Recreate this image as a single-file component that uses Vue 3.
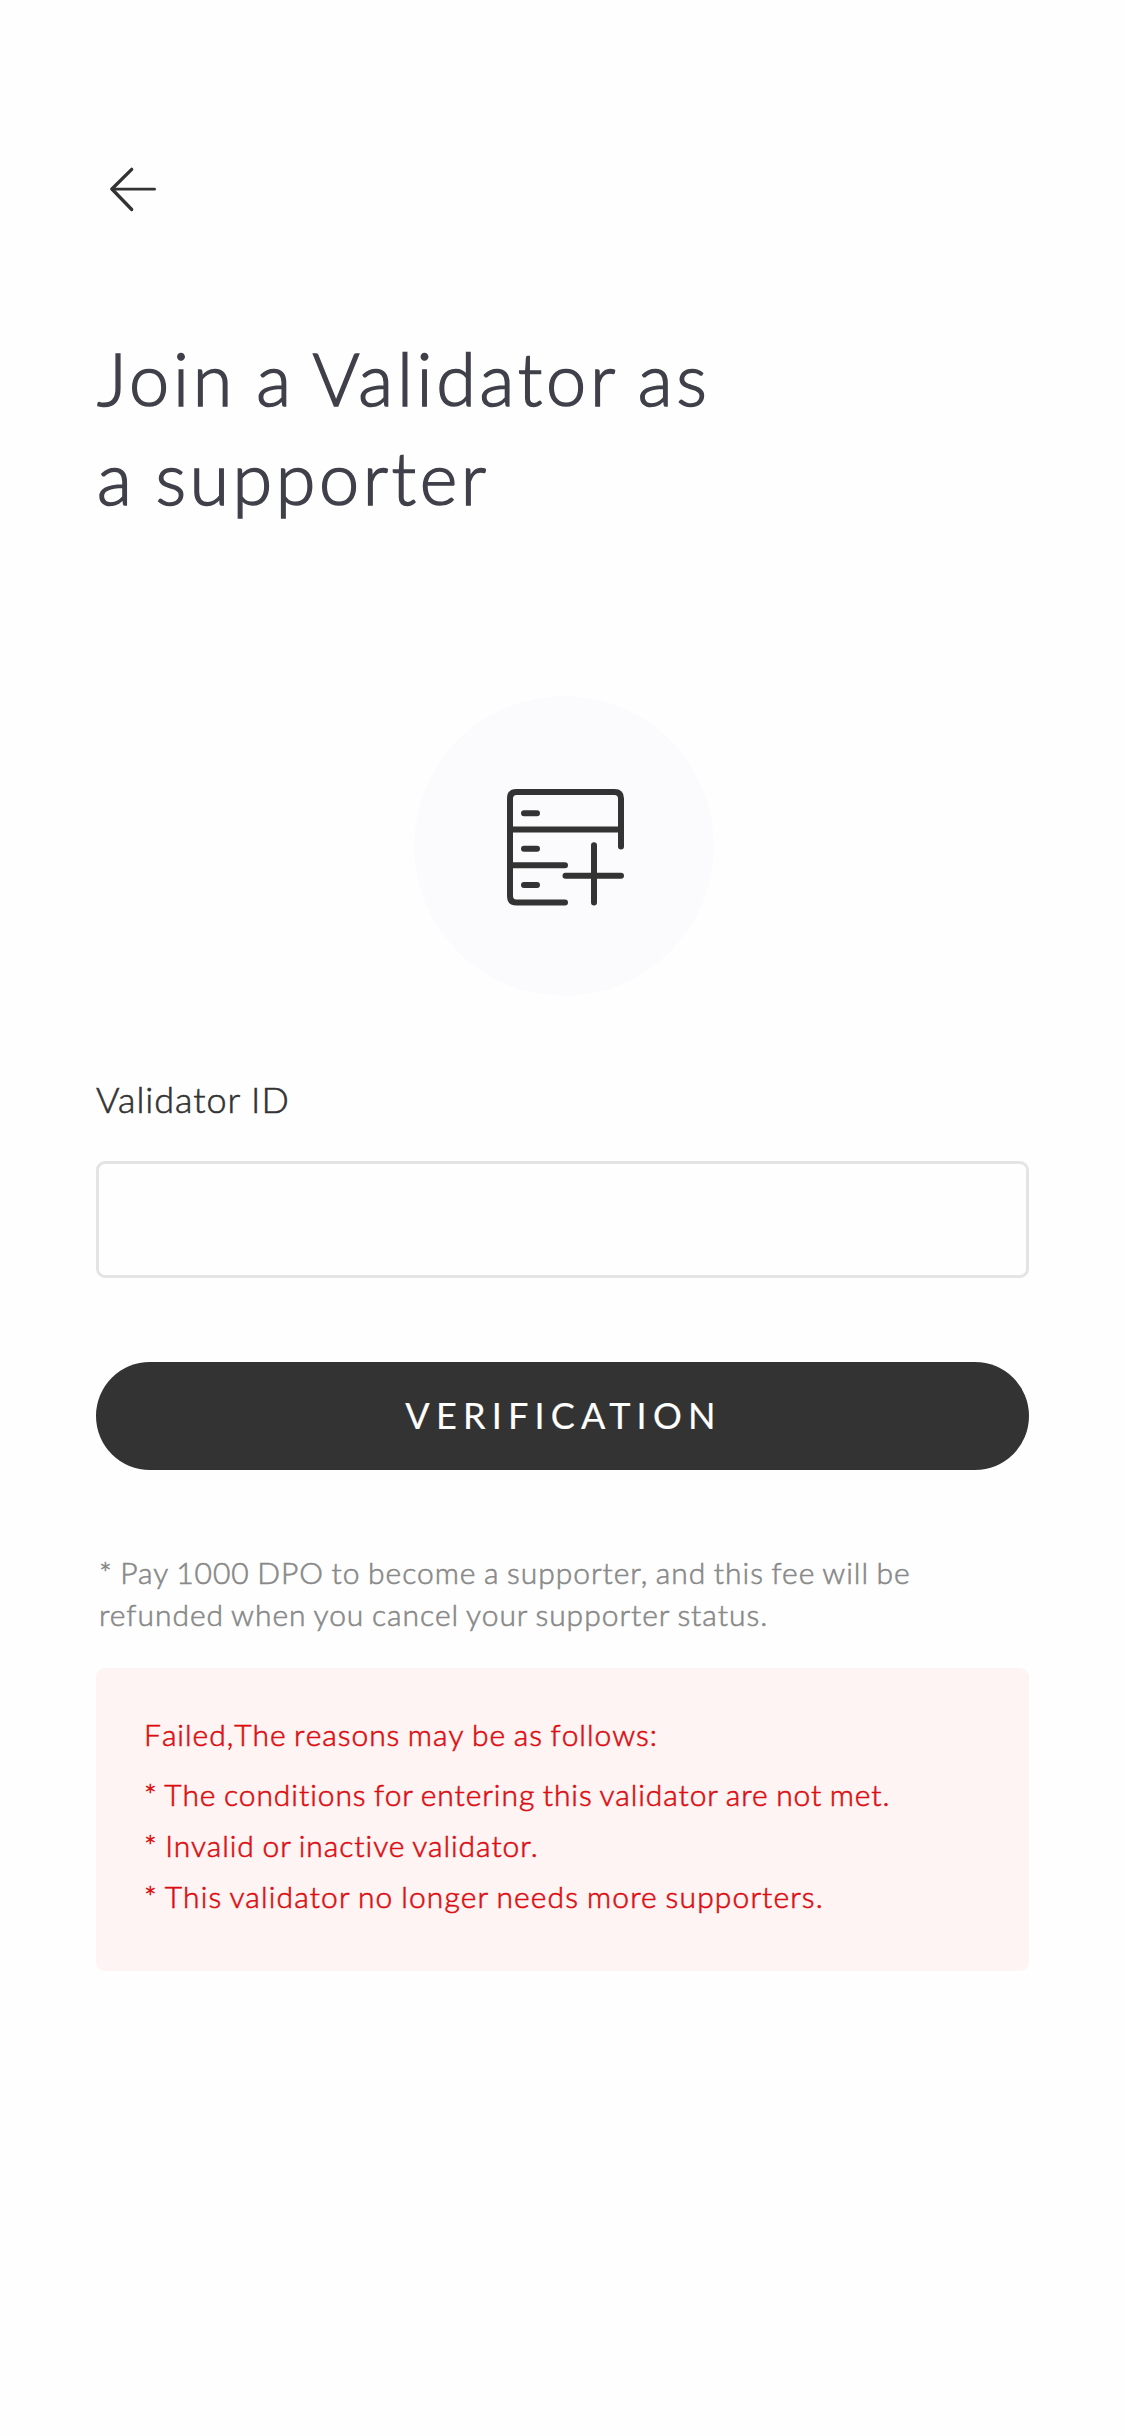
<script setup>
import { ref } from 'vue'

const validatorId = ref('')
const reasons = [
  { text: '* The conditions for entering this validator are not met.', cls: 'conditions' },
  { text: '* Invalid or inactive validator.', cls: 'invalid' },
  { text: '* This validator no longer needs more supporters.', cls: 'full' },
]
</script>

<template>
  <main class="page">
    <button class="back" aria-label="Back">
      <svg width="48" height="48" viewBox="0 0 48 48" fill="none" stroke="#333" stroke-linecap="round" stroke-linejoin="round">
        <path d="M22.7 4.3 2.9 24l19.8 20.5" stroke-width="3.3" />
        <path d="M3 24.2h42.5" stroke-width="2.8" />
      </svg>
    </button>

    <h1 class="title">
      <span class="first">Join a Validator as</span>
      <span class="second">a supporter</span>
    </h1>

    <div class="badge">
      <svg width="118" height="118" viewBox="0 0 118 118" fill="none" stroke="#333" stroke-width="6" stroke-linecap="round">
        <path d="M115 58.500V10.500Q115 4 108.500 4H10.500Q4 4 4 10.500V108Q4 114.500 10.500 114.500H59" />
        <path d="M4 41.500H115M4 77.200H59M18 25.200H31M18 60.700H31M18 97H31" />
        <path d="M88 57.200V114.500M59.500 87.800H115" />
      </svg>
    </div>

    <label class="label" for="validator">Validator ID</label>
    <input id="validator" v-model="validatorId" class="field" type="text" />

    <button class="submit">VERIFICATION</button>

    <p class="note">
      <span class="fee">* Pay 1000 DPO to become a supporter, and this fee will be</span>
      <span class="refund">refunded when you cancel your supporter status.</span>
    </p>

    <section class="error">
      <p class="heading">Failed,The reasons may be as follows:</p>
      <p v-for="reason in reasons" :key="reason.cls" class="reason" :class="reason.cls">{{ reason.text }}</p>
    </section>
  </main>
</template>

<style>
body {
  margin: 0;
  background: #fefefe;
}
</style>

<style scoped>
.page {
  box-sizing: border-box;
  display: flex;
  flex-direction: column;
  width: 1125px;
  height: 2436px;
  padding: 165px 96px 0;
  background: #fefefe;
  color: #333;
  font-family: Lato, "Open Sans", sans-serif;
  font-weight: 300;
}

.back {
  display: block;
  width: 48px;
  height: 48px;
  margin-left: 13px;
  padding: 0;
  border: 0;
  background: none;
}

.back svg {
  display: block;
}

.title {
  display: flex;
  flex-direction: column;
  margin: 116px 0 0 1px;
  color: #40404a;
  font-size: 72px;
  font-weight: 300;
  line-height: 99px;
  white-space: nowrap;
  -webkit-text-stroke: 1.5px currentColor;
}

.first {
  letter-spacing: 3.7px;
  word-spacing: -3px;
}

.second {
  letter-spacing: 3.5px;
  word-spacing: -3px;
}

.badge {
  display: flex;
  align-items: center;
  justify-content: center;
  width: 300px;
  height: 300px;
  margin: 169px 0 0 318px;
  border-radius: 50%;
  background: #fbfbfd;
}

.badge svg {
  margin: 2px 0 0 2px;
}

.label {
  margin-top: 78px;
  font-size: 36px;
  line-height: 50px;
  letter-spacing: 0.95px;
  -webkit-text-stroke: 0.6px currentColor;
}

.field {
  box-sizing: border-box;
  width: 933px;
  height: 117px;
  margin: 37px 0 0;
  padding: 0 30px;
  border: 3px solid #e4e4e4;
  border-radius: 9px;
  outline: 0;
  background: #fefefe;
  font: inherit;
  font-size: 36px;
}

.submit {
  height: 108px;
  margin: 84px 0 0;
  padding: 0 0 2px 2px;
  border: 0;
  border-radius: 54px;
  background: #333;
  color: #fff;
  font-family: inherit;
  font-size: 36px;
  font-weight: 400;
  line-height: 106px;
  letter-spacing: 6.21px;
  -webkit-text-stroke: 0.2px currentColor;
}

.note {
  display: flex;
  flex-direction: column;
  margin: 81px 0 0 3px;
  color: #898989;
  font-size: 30px;
  line-height: 42px;
  white-space: nowrap;
  word-spacing: -1.5px;
  -webkit-text-stroke: 0.6px currentColor;
}

.fee {
  letter-spacing: 0.96px;
}

.refund {
  letter-spacing: 0.98px;
}

.error {
  box-sizing: border-box;
  height: 303px;
  margin-top: 33px;
  padding: 45px 0 0 48px;
  border-radius: 9px;
  background: #fef4f3;
  color: #db0d12;
  font-size: 30px;
  white-space: nowrap;
  word-spacing: -1.5px;
  -webkit-text-stroke: 0.6px currentColor;
}

.heading {
  margin: 0 0 14px;
  line-height: 42px;
  letter-spacing: 0.95px;
  font-kerning: none;
}

.reason {
  margin: 0;
  line-height: 51px;
}

.conditions {
  letter-spacing: 0.93px;
}

.invalid {
  letter-spacing: 0.95px;
}

.full {
  letter-spacing: 1.14px;
}
</style>
